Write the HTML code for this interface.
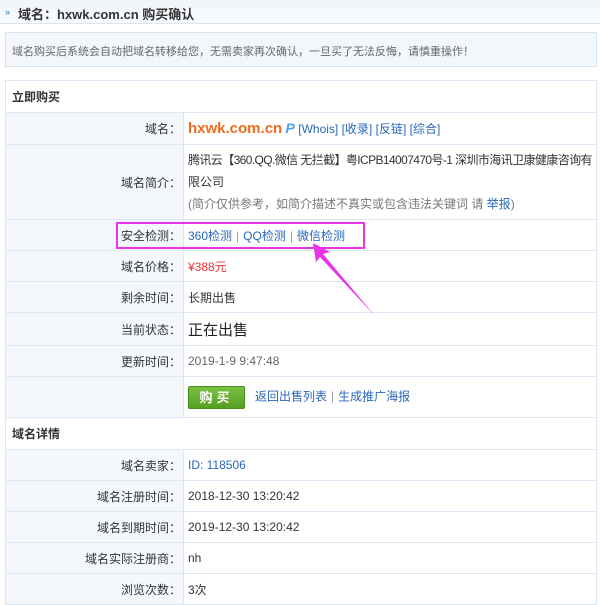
<!DOCTYPE html>
<html><head><meta charset="utf-8"><style>
*{margin:0;padding:0;box-sizing:border-box}
body{width:600px;height:605px;background:#fff;font-family:"Liberation Sans","Noto Sans CJK SC",sans-serif;font-size:12px;color:#333;position:relative;overflow:hidden}
.top{position:absolute;left:0;top:0;width:600px;height:24px;background:linear-gradient(#f0f5fb,#f9fbfe);border-bottom:1px solid #dde6f0}
.top span{position:absolute;left:18px;top:4px;font-size:13px;font-weight:bold;color:#333}
.top i{position:absolute;left:5px;top:7px;font-style:normal;font-size:9px;color:#5a8ed0;font-weight:bold}
.note{position:absolute;left:5px;top:32px;width:592px;height:35px;background:#f3f7fc;border:1px solid #d6e4f4;color:#666;padding:10px 0 0 6px;font-size:11px}
table{position:absolute;left:5px;width:592px;border-collapse:collapse}
td{border:1px solid #dbe7f5;height:31px;vertical-align:middle}
td.l{width:178px;background:#f4f8fd;text-align:right;padding-right:2px;color:#333}
td.v{padding-left:4px}
td.h{font-weight:bold;padding-left:6px;background:#fff;height:32px}
a{color:#2a67b8;text-decoration:none}
.sep{color:#999;margin:0 4px}
.btn{display:inline-block;width:57px;height:23px;background:linear-gradient(#7cc043,#55a020);border:1px solid #4b8d1d;border-radius:2px;color:#fff;font-weight:bold;text-align:center;line-height:21px;font-size:13px;letter-spacing:4px;vertical-align:middle;margin-right:10px}
</style></head><body>
<div class="top"><i>»</i><span>域名：hxwk.com.cn 购买确认</span></div>
<div class="note">域名购买后系统会自动把域名转移给您，无需卖家再次确认，一旦买了无法反悔，请慎重操作！</div>
<table style="top:80px">
<tr><td colspan="2" class="h">立即购买</td></tr>
<tr><td class="l" style="height:32px">域名：</td><td class="v"><b style="color:#f26a1b;font-size:15px">hxwk.com.cn</b> <b style="color:#49a6e8;font-style:italic;font-size:14px">P</b> <a>[Whois]</a> <a>[收录]</a> <a>[反链]</a> <a>[综合]</a></td></tr>
<tr><td class="l" style="height:75px">域名简介：</td><td class="v" style="line-height:22px;padding-right:0"><span style="letter-spacing:-0.6px;white-space:nowrap">腾讯云【360.QQ.微信 无拦截】粤ICPB14007470号-1 深圳市海讯卫康健康咨询有</span><br>限公司<br><span style="color:#777">(简介仅供参考，如简介描述不真实或包含违法关键词 请 <a>举报</a>)</span></td></tr>
<tr><td class="l">安全检测：</td><td class="v"><a>360检测</a><span class="sep">|</span><a>QQ检测</a><span class="sep">|</span><a>微信检测</a></td></tr>
<tr><td class="l">域名价格：</td><td class="v" style="color:#e33">¥388元</td></tr>
<tr><td class="l">剩余时间：</td><td class="v">长期出售</td></tr>
<tr><td class="l" style="height:33px">当前状态：</td><td class="v" style="font-size:15px;color:#222">正在出售</td></tr>
<tr><td class="l">更新时间：</td><td class="v" style="color:#666">2019-1-9 9:47:48</td></tr>
<tr><td class="l" style="height:41px"></td><td class="v"><span class="btn">购买</span><a>返回出售列表</a><span class="sep">|</span><a>生成推广海报</a></td></tr>
</table>
<table style="top:417px">
<tr><td colspan="2" class="h">域名详情</td></tr>
<tr><td class="l">域名卖家：</td><td class="v"><a>ID: 118506</a></td></tr>
<tr><td class="l">域名注册时间：</td><td class="v">2018-12-30 13:20:42</td></tr>
<tr><td class="l">域名到期时间：</td><td class="v">2019-12-30 13:20:42</td></tr>
<tr><td class="l">域名实际注册商：</td><td class="v">nh</td></tr>
<tr><td class="l">浏览次数：</td><td class="v">3次</td></tr>
</table>
<div style="position:absolute;left:116px;top:222px;width:249px;height:27px;border:2px solid #e834e8"></div>
<svg style="position:absolute;left:0;top:0" width="600" height="605"><polygon points="313,243 330,252 323,254 375,316 320,257 316,262" fill="#e834e8"/></svg>
</body></html>
